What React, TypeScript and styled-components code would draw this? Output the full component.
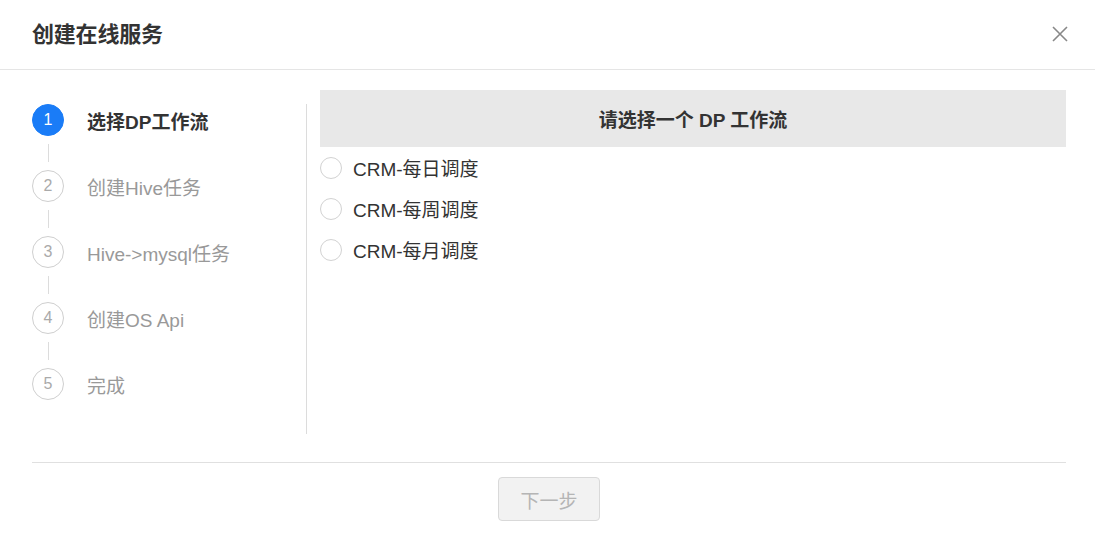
import React, { useState } from "react";
import styled, { createGlobalStyle } from "styled-components";

const GlobalStyle = createGlobalStyle`
  html, body {
    margin: 0;
    padding: 0;
    background: #fff;
  }
  body {
    font-family: "Liberation Sans", "Noto Sans CJK SC", sans-serif;
    color: #333;
  }
`;

const Dialog = styled.div`
  width: 1095px;
  height: 550px;
  background: #fff;
  display: flex;
  flex-direction: column;
`;

const Header = styled.div`
  height: 69px;
  border-bottom: 1px solid #e5e5e5;
  display: flex;
  align-items: center;
  justify-content: space-between;
  padding: 0 27px 0 32px;
`;

const Title = styled.h2`
  margin: -5px 0 0;
  font-size: 22px;
  font-weight: 600;
  color: #333;
  letter-spacing: -0.2px;
`;

const CloseButton = styled.button`
  border: none;
  background: none;
  padding: 0;
  width: 16px;
  height: 16px;
  display: flex;
  cursor: pointer;
  margin-top: -1px;
`;

const Body = styled.div`
  display: flex;
  padding: 20px 29px 0 32px;
`;

const StepColumn = styled.div`
  width: 275px;
  height: 330px;
  margin-top: 14px;
  border-right: 1px solid #dcdcdc;
  box-sizing: border-box;
  display: flex;
  flex-direction: column;
`;

const StepRow = styled.div`
  display: flex;
  align-items: center;
  height: 32px;
`;

const StepCircle = styled.div<{ $active?: boolean }>`
  width: 32px;
  height: 32px;
  box-sizing: border-box;
  border-radius: 50%;
  border: 1px solid ${(p) => (p.$active ? "#1a7cf7" : "#cfcfcf")};
  background: ${(p) => (p.$active ? "#1a7cf7" : "#fff")};
  color: ${(p) => (p.$active ? "#fff" : "#aaa")};
  font-size: 16px;
  display: flex;
  align-items: center;
  justify-content: center;
  flex-shrink: 0;
`;

const StepLabel = styled.span<{ $active?: boolean }>`
  margin-left: 23px;
  font-size: 19px;
  font-weight: ${(p) => (p.$active ? 600 : 400)};
  color: ${(p) => (p.$active ? "#333" : "#999")};
  white-space: nowrap;
`;

const Connector = styled.div`
  width: 1px;
  height: 18px;
  margin: 8px 0 8px 16px;
  background: #dcdcdc;
`;

const Content = styled.div`
  flex: 1;
  margin-left: 13px;
`;

const PanelHeader = styled.div`
  height: 57px;
  background: #e8e8e8;
  display: flex;
  align-items: center;
  justify-content: center;
  font-size: 19px;
  font-weight: 600;
  color: #333;
`;

const OptionList = styled.div`
  display: flex;
  flex-direction: column;
`;

const Option = styled.label`
  display: flex;
  align-items: center;
  height: 41px;
  cursor: pointer;
  font-size: 19px;
  color: #333;
`;

const Radio = styled.span<{ $checked?: boolean }>`
  width: 22px;
  height: 22px;
  box-sizing: border-box;
  border-radius: 50%;
  border: 1px solid ${(p) => (p.$checked ? "#1a7cf7" : "#d2d2d2")};
  background: #fff;
  margin-right: 11px;
  display: flex;
  align-items: center;
  justify-content: center;

  &::after {
    content: "";
    width: 10px;
    height: 10px;
    border-radius: 50%;
    background: ${(p) => (p.$checked ? "#1a7cf7" : "transparent")};
  }
`;

const Footer = styled.div`
  margin: 28px 29px 0 32px;
  border-top: 1px solid #e0e0e0;
  padding-top: 14px;
  display: flex;
  justify-content: center;
`;

const NextButton = styled.button`
  width: 102px;
  height: 44px;
  border: 1px solid #d9d9d9;
  border-radius: 4px;
  background: #f2f2f2;
  color: #b5b5b5;
  font-family: inherit;
  font-size: 19px;
  cursor: not-allowed;
`;

const steps = ["选择DP工作流", "创建Hive任务", "Hive->mysql任务", "创建OS Api", "完成"];
const flows = ["CRM-每日调度", "CRM-每周调度", "CRM-每月调度"];

const App: React.FC = () => {
  const [current] = useState(0);
  const [selected, setSelected] = useState<number | null>(null);

  return (
    <>
      <GlobalStyle />
      <Dialog>
        <Header>
          <Title>创建在线服务</Title>
          <CloseButton aria-label="关闭">
            <svg width="16" height="16" viewBox="0 0 16 16">
              <path d="M1 1 L15 15 M15 1 L1 15" stroke="#888" strokeWidth="1.6" />
            </svg>
          </CloseButton>
        </Header>
        <Body>
          <StepColumn>
            {steps.map((s, i) => (
              <React.Fragment key={s}>
                {i > 0 && <Connector />}
                <StepRow>
                  <StepCircle $active={i === current}>{i + 1}</StepCircle>
                  <StepLabel $active={i === current}>{s}</StepLabel>
                </StepRow>
              </React.Fragment>
            ))}
          </StepColumn>
          <Content>
            <PanelHeader>请选择一个 DP 工作流</PanelHeader>
            <OptionList>
              {flows.map((f, i) => (
                <Option key={f} onClick={() => setSelected(i)}>
                  <Radio $checked={selected === i} />
                  {f}
                </Option>
              ))}
            </OptionList>
          </Content>
        </Body>
        <Footer>
          <NextButton disabled={selected === null}>下一步</NextButton>
        </Footer>
      </Dialog>
    </>
  );
};

export default App;
